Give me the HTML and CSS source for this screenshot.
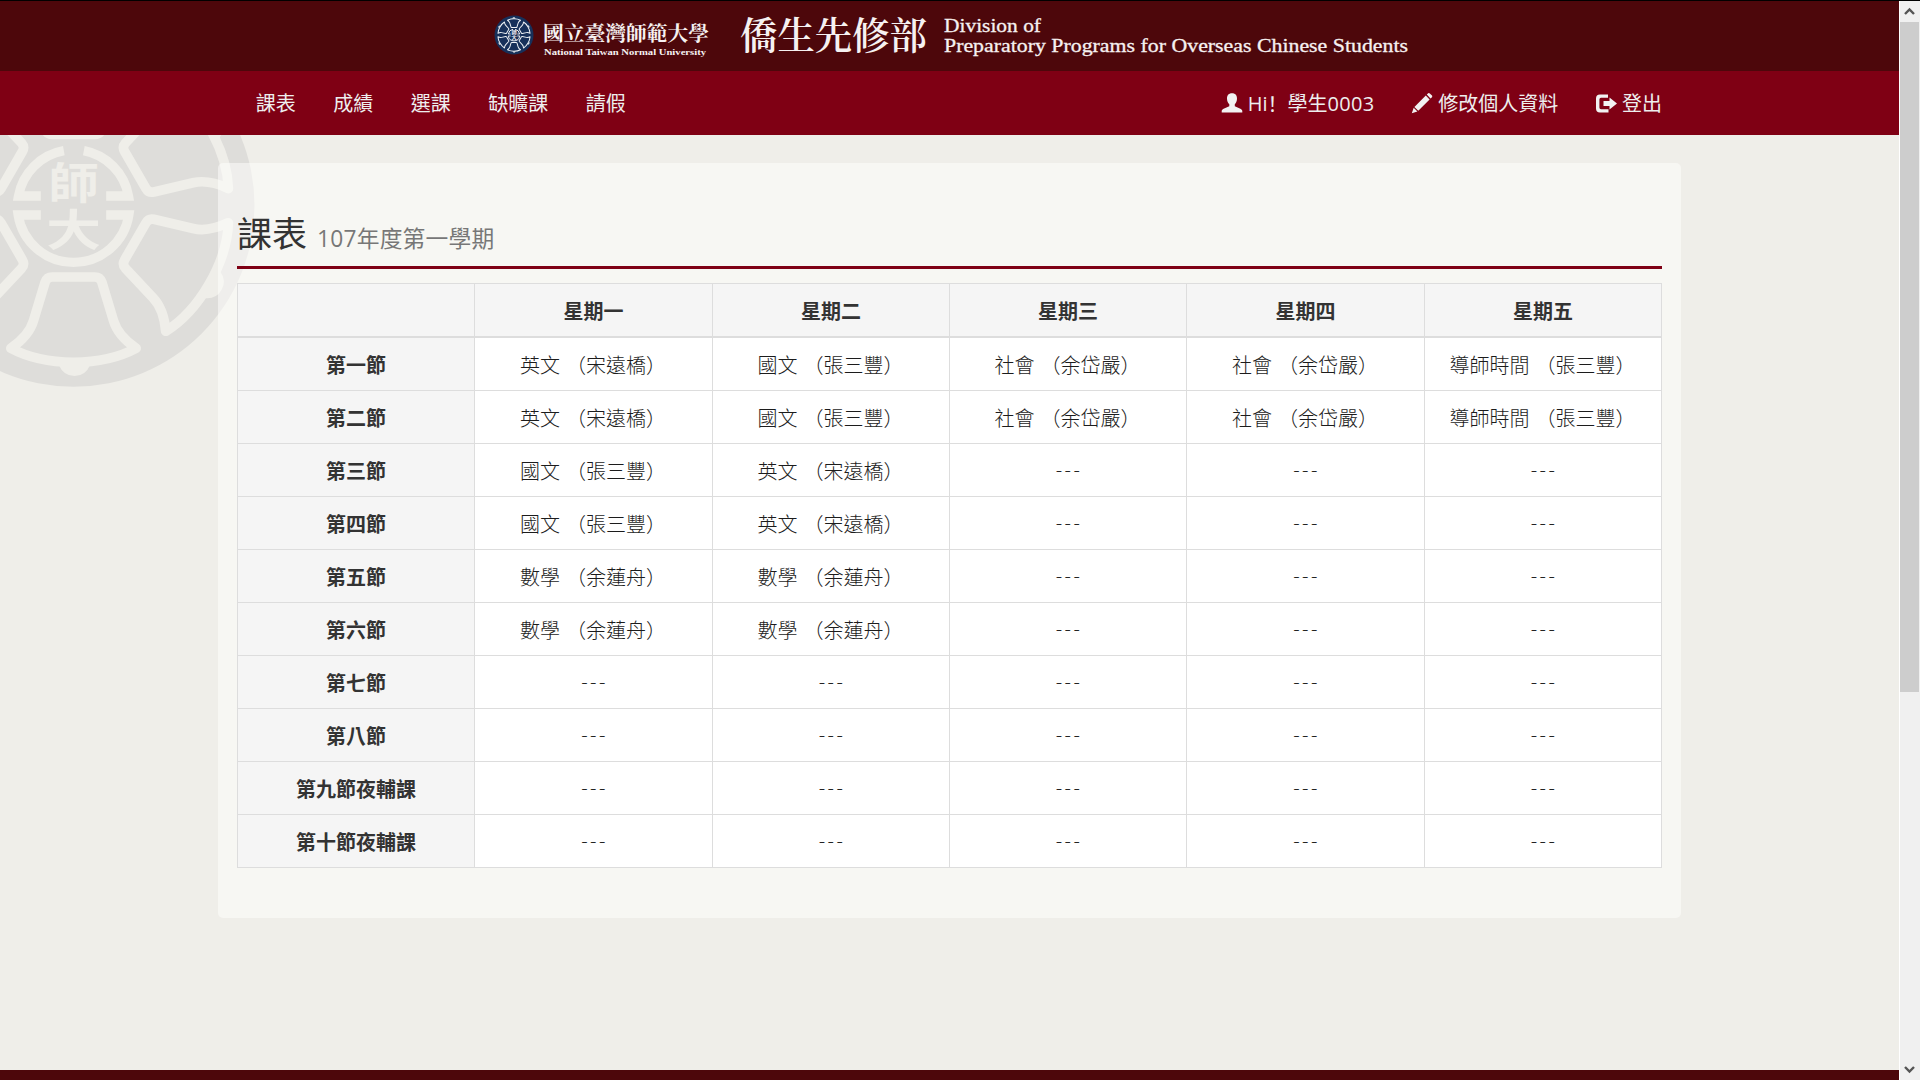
FILE: index.html
```
<!DOCTYPE html>
<html lang="zh-Hant">
<head>
<meta charset="utf-8">
<title>課表</title>
<link rel="stylesheet" href="styles.css">
</head>
<body>
<svg class="defs" width="0" height="0" aria-hidden="true">
  <defs>
    <g id="bell">
      <path fill="none" stroke="currentColor" stroke-width="29" stroke-linejoin="round" d="M-64 214H64Q80 214 85 229L120 345Q133 390 188 428Q110 470 0 470Q-110 470 -188 428Q-133 390 -120 345L-85 229Q-80 214 -64 214Z"/>
      <path fill="currentColor" d="M-44 478Q-30 511 3 511Q36 511 50 478Z"/>
    </g>
    <g id="emblem">
      <use href="#bell"/>
      <use href="#bell" transform="rotate(60)"/>
      <use href="#bell" transform="rotate(120)"/>
      <use href="#bell" transform="rotate(180)"/>
      <use href="#bell" transform="rotate(240)"/>
      <use href="#bell" transform="rotate(300)"/>
      <path fill="none" stroke="currentColor" stroke-width="28" d="M31 -165A168 168 0 0 1 165 -29H98M-29 -165A168 168 0 0 0 -165 -29H-98M98 28H166A168 168 0 0 1 -166 28H-98"/>
      <g fill="currentColor" class="emblem-text" text-anchor="middle">
        <text transform="translate(0 -20) scale(1 .86)">師</text>
        <text transform="translate(0 120) scale(1.08 .86)">大</text>
      </g>
    </g>
  </defs>
</svg>
<div class="window">
  <div class="page">
    <header class="banner">
      <svg class="logo" width="930" height="70" viewBox="0 0 930 70">
        <g transform="translate(29 34)"><circle r="19.500" fill="#17305a"/><g transform="scale(.0345)" class="logo-mark"><use href="#emblem"/></g></g>
        <g fill="#f6f1f1">
          <text class="brush" x="58" y="40" textLength="166" lengthAdjust="spacingAndGlyphs">國立臺灣師範大學</text>
          <text class="brush-en" x="59" y="54" textLength="162" lengthAdjust="spacingAndGlyphs">National Taiwan Normal University</text>
          <text class="dept" x="255" y="48" textLength="187" lengthAdjust="spacingAndGlyphs">僑生先修部</text>
          <text class="dept-en" x="459" y="31" textLength="97" lengthAdjust="spacingAndGlyphs">Division of</text>
          <text class="dept-en" x="459" y="51" textLength="464" lengthAdjust="spacingAndGlyphs">Preparatory Programs for Overseas Chinese Students</text>
        </g>
      </svg>
    </header>
    <nav class="navbar">
      <ul class="menu">
        <li>課表</li><li>成績</li><li>選課</li><li>缺曠課</li><li>請假</li>
      </ul>
      <ul class="menu account">
        <li><svg class="icon" viewBox="0 0 20 20"><path d="M10 .3C13.400 .3 15.100 2.500 15 5.800C14.900 8.200 14 10 12.800 11.300V13.300L17.800 15.600C19.500 16.400 20.300 17 20.300 18.200V19.500H-.3V18.200C-.3 17 .5 16.400 2.200 15.600L7.300 13.300V11.300C6 10 5.100 8.200 5 5.800C4.900 2.500 6.600 .3 10 .3Z"/></svg>Hi<span class="bang" lang="zh-Hans">！</span>學生<span class="digits">0003</span></li>
        <li><svg class="icon" viewBox="0 0 20 20"><path d="M14.800 1.600L16.200 .3Q17 -.3 17.800 .4L20 2.600Q20.600 3.400 20 4.200L18.500 5.600ZM13.800 2.500L17.600 6.400L6.300 17.700L2.400 13.900ZM1.700 14.800L5.400 18.500L-.2 20.200Z"/></svg>修改個人資料</li>
        <li><svg class="icon" viewBox="0 0 20 20"><path d="M12 1.600H4Q0 1.600 0 5.600V15.400Q0 19.400 4 19.400H12.500V16.200H5Q3.400 16.200 3.400 14.600V6.400Q3.400 4.800 5 4.800H12ZM13.500 4.500L21 10.500L13.500 16.500V13H7.500V8H13.500Z"/></svg>登出</li>
      </ul>
    </nav>
    <main class="content">
      <svg class="watermark" width="256" height="252" viewBox="-220.500 -212 768 756">
        <circle r="543" fill="#dedddA"/>
        <use href="#emblem"/>
      </svg>
      <section class="panel">
        <h2 class="title">課表 <small>107年度第一學期</small></h2>
        <table class="schedule">
          <colgroup><col class="w"><col class="x"><col class="w"><col class="w"><col class="x"><col class="w"></colgroup>
          <thead><tr><th></th><th>星期一</th><th>星期二</th><th>星期三</th><th>星期四</th><th>星期五</th></tr></thead>
          <tbody>
            <tr><th>第一節</th><td>英文 （宋遠橋）</td><td>國文 （張三豐）</td><td>社會 （余岱嚴）</td><td>社會 （余岱嚴）</td><td>導師時間 （張三豐）</td></tr>
            <tr><th>第二節</th><td>英文 （宋遠橋）</td><td>國文 （張三豐）</td><td>社會 （余岱嚴）</td><td>社會 （余岱嚴）</td><td>導師時間 （張三豐）</td></tr>
            <tr><th>第三節</th><td>國文 （張三豐）</td><td>英文 （宋遠橋）</td><td class="none">---</td><td class="none">---</td><td class="none">---</td></tr>
            <tr><th>第四節</th><td>國文 （張三豐）</td><td>英文 （宋遠橋）</td><td class="none">---</td><td class="none">---</td><td class="none">---</td></tr>
            <tr><th>第五節</th><td>數學 （余蓮舟）</td><td>數學 （余蓮舟）</td><td class="none">---</td><td class="none">---</td><td class="none">---</td></tr>
            <tr><th>第六節</th><td>數學 （余蓮舟）</td><td>數學 （余蓮舟）</td><td class="none">---</td><td class="none">---</td><td class="none">---</td></tr>
            <tr><th>第七節</th><td class="none">---</td><td class="none">---</td><td class="none">---</td><td class="none">---</td><td class="none">---</td></tr>
            <tr><th>第八節</th><td class="none">---</td><td class="none">---</td><td class="none">---</td><td class="none">---</td><td class="none">---</td></tr>
            <tr><th>第九節夜輔課</th><td class="none">---</td><td class="none">---</td><td class="none">---</td><td class="none">---</td><td class="none">---</td></tr>
            <tr><th>第十節夜輔課</th><td class="none">---</td><td class="none">---</td><td class="none">---</td><td class="none">---</td><td class="none">---</td></tr>
          </tbody>
        </table>
      </section>
    </main>
    <footer class="footer"></footer>
  </div>
  <div class="scrollbar">
    <svg width="19" height="21" viewBox="0 0 19 21"><path d="M5 13L9.500 8.500L14 13" fill="none" stroke="#555" stroke-width="2.400"/></svg>
    <div class="thumb"></div>
    <svg class="down" width="19" height="21" viewBox="0 0 19 21"><path d="M5 8L9.500 12.500L14 8" fill="none" stroke="#555" stroke-width="2.400"/></svg>
  </div>
</div>
</body>
</html>
```
FILE: styles.css
```
* { box-sizing: border-box; }
body {
  margin: 0;
  overflow: hidden;
  font: 20px/28px "Open Sans", "Noto Sans CJK TC", sans-serif;
  color: #333;
}
.defs { position: absolute; }
.window {
  display: flex;
  height: 1080px;
  border-top: 1px solid #000;
}
.page {
  display: flex;
  flex-direction: column;
  width: 1899px;
  background: #efeee9;
}
.banner {
  height: 70px;
  padding-left: 485px;
  background: #4d070b;
}
.logo { display: block; }
.logo-mark { color: #eef1f5; }
.emblem-text { font: 700 152px "Noto Sans CJK TC", sans-serif; }
.brush { font: 700 20px "Noto Serif CJK TC", "Noto Sans CJK TC", serif; }
.brush-en { font: 700 9px "Liberation Serif", serif; }
.dept { font: 600 38px "Noto Serif CJK TC", "Noto Sans CJK TC", serif; }
.dept-en { font: 19.500px "Liberation Serif", serif; stroke: #f6f1f1; stroke-width: .3px; }
.navbar {
  display: flex;
  justify-content: space-between;
  height: 64px;
  padding: 0 218px 0 237px;
  background: #7f0014;
  color: #eee;
}
.menu {
  display: flex;
  margin: 0;
  padding: 0;
  list-style: none;
}
.menu li {
  display: flex;
  align-items: center;
  padding: 2px 18.750px 0;
  white-space: nowrap;
}
.account li { padding-right: 19px; }
.icon {
  width: 20px;
  height: 20px;
  margin: 0 6px 2px 0;
  fill: #f2f2f2;
  overflow: visible;
}
.bang { font-family: "Noto Sans CJK SC", sans-serif; }
.digits { letter-spacing: .3px; }
.content {
  position: relative;
  flex: 1;
  padding: 28px 218px 0;
}
.watermark {
  position: absolute;
  left: 0;
  top: 0;
  color: #efeee9;
}
.panel {
  position: relative;
  height: 755px;
  padding: 51px 19px 0;
  border-radius: 5px;
  background: rgba(255, 255, 253, .5);
}
.title {
  height: 55px;
  margin: 0 0 14px;
  border-bottom: 3px solid #7f0014;
  font-size: 35px;
  font-weight: 400;
  line-height: 39px;
  white-space: nowrap;
}
.title small {
  margin-left: 1px;
  font-size: 22.750px;
  letter-spacing: .2px;
  color: #777;
}
.schedule {
  width: 1425px;
  table-layout: fixed;
  border-collapse: separate;
  border-spacing: 0;
  border: solid #ddd;
  border-width: 1px 0 0 1px;
  background: #fff;
}
.w { width: 237px; }
.x { width: 238px; }
.schedule th, .schedule td {
  height: 53px;
  padding: 4px 0 0;
  border: solid #ddd;
  border-width: 0 1px 1px 0;
  text-align: center;
  white-space: nowrap;
}
.schedule td {
  padding-right: 1px;
  font-weight: 300;
  word-spacing: 1px;
  color: #1c1c1c;
}
.schedule th { background: #f5f5f5; }
.schedule thead th { height: 54px; border-bottom-width: 2px; }
.schedule .none {
  padding: 0;
  letter-spacing: 2.360px;
  text-indent: 2px;
}
.footer { height: 10px; background: #4d070b; }
.scrollbar {
  display: flex;
  flex-direction: column;
  width: 21px;
  padding: 0 1px 0 0;
  border-left: 1px solid #fff;
  background: #f0f0f0;
}
.thumb { height: 670px; background: #cdcdcd; }
.down { margin-top: auto; }
```
